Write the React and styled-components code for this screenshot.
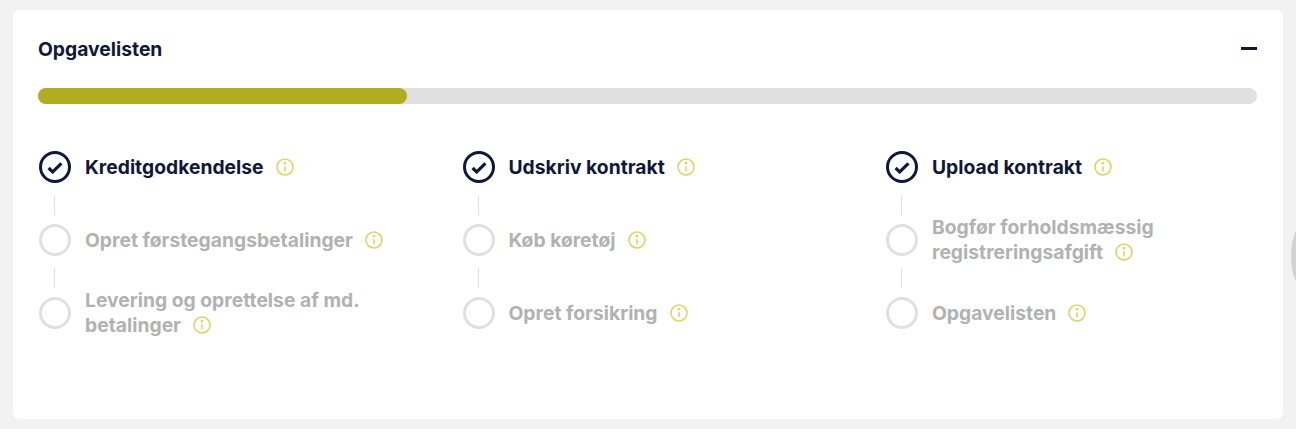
import React from 'react';
import styled, { createGlobalStyle } from 'styled-components';

const GlobalStyle = createGlobalStyle`
	html, body {
		margin: 0;
		height: 100%;
		background: #f2f2f2;
		overflow: hidden;
	}
`;

const Page = styled.div`
	position: relative;
	height: 429px;
	padding: 10px 13px;
	box-sizing: border-box;
	overflow: hidden;
	font-family: 'Inter', 'Liberation Sans', sans-serif;
`;

const Card = styled.section`
	height: 409px;
	padding: 0 26px 0 25px;
	box-sizing: border-box;
	background: #fff;
	border-radius: 6px;
`;

const Header = styled.header`
	display: flex;
	align-items: center;
	justify-content: space-between;
	height: 78px;
`;

const Title = styled.h2`
	margin: 0;
	font-size: 19.3px;
	font-weight: 700;
	color: #10183a;
`;

const Collapse = styled.span`
	display: block;
	width: 16px;
	height: 3px;
	margin-bottom: 2px;
	background: #10183a;
`;

const Track = styled.div`
	height: 16px;
	border-radius: 8px;
	background: #e0e0e0;
`;

const Fill = styled.div`
	height: 100%;
	border-radius: 8px;
	background: #b2ac20;
`;

const Columns = styled.div`
	display: grid;
	grid-template-columns: repeat(3, 423.5px);
	margin-top: 38px;
`;

const Step = styled.div`
	display: flex;
	align-items: center;
	gap: 14px;
	height: 50px;
`;

const Circle = styled.span`
	flex: none;
	display: flex;
	align-items: center;
	justify-content: center;
	width: 32px;
	height: 32px;
	margin-left: 1px;
	box-sizing: border-box;
	border-radius: 50%;
	border: 3px solid ${(p) => (p.$done ? '#10183a' : '#e0e0e0')};
`;

const Label = styled.span`
	width: 330px;
	font-size: 19.3px;
	line-height: 25px;
	font-weight: 700;
	color: ${(p) => (p.$done ? '#10183a' : '#b2b2b2')};
`;

const Info = styled.svg`
	width: 18px;
	height: 18px;
	margin-left: 12px;
	vertical-align: -2px;
`;

const ConnectorGap = styled.div`
	height: 23px;
	padding: 3px 0 0 16px;
	box-sizing: border-box;
`;

const Connector = styled.div`
	width: 1px;
	height: 20px;
	background: #e2e2e2;
`;

const Edge = styled.span`
	position: absolute;
	top: 186px;
	left: 1291px;
	width: 140px;
	height: 140px;
	border-radius: 50%;
	background: #d2d2d2;
`;

const columns = [
	[
		{ text: 'Kreditgodkendelse', done: true },
		{ text: 'Opret førstegangsbetalinger' },
		{ text: 'Levering og oprettelse af md. betalinger' },
	],
	[
		{ text: 'Udskriv kontrakt', done: true },
		{ text: 'Køb køretøj' },
		{ text: 'Opret forsikring' },
	],
	[
		{ text: 'Upload kontrakt', done: true },
		{ text: 'Bogfør forholdsmæssig registreringsafgift' },
		{ text: 'Opgavelisten' },
	],
];

function InfoIcon() {
	return (
		<Info viewBox='0 0 18 18' fill='none' stroke='#dfd566' strokeWidth='1.6'>
			<circle cx='9' cy='9' r='8' />
			<path d='M9 8.2v5' />
			<circle cx='9' cy='5.2' r='0.6' fill='#dfd566' />
		</Info>
	);
}

function App() {
	return (
		<Page>
			<GlobalStyle />
			<Card>
				<Header>
					<Title>Opgavelisten</Title>
					<Collapse />
				</Header>
				<Track>
					<Fill style={{ width: `${(369 / 1219) * 100}%` }} />
				</Track>
				<Columns>
					{columns.map((steps) => (
						<div key={steps[0].text}>
							{steps.map((step, i) => (
								<React.Fragment key={step.text}>
									{i > 0 && (
										<ConnectorGap>
											<Connector />
										</ConnectorGap>
									)}
									<Step>
										<Circle $done={step.done}>
											{step.done && (
												<svg width='16' height='13' viewBox='0 0 16 13' fill='none'>
													<path d='M1.6 7l4.1 3.9L14.4 2.4' stroke='#10183a' strokeWidth='3.2' />
												</svg>
											)}
										</Circle>
										<Label $done={step.done}>
											{step.text}
											<InfoIcon />
										</Label>
									</Step>
								</React.Fragment>
							))}
						</div>
					))}
				</Columns>
			</Card>
			<Edge />
		</Page>
	);
}

export default App;
